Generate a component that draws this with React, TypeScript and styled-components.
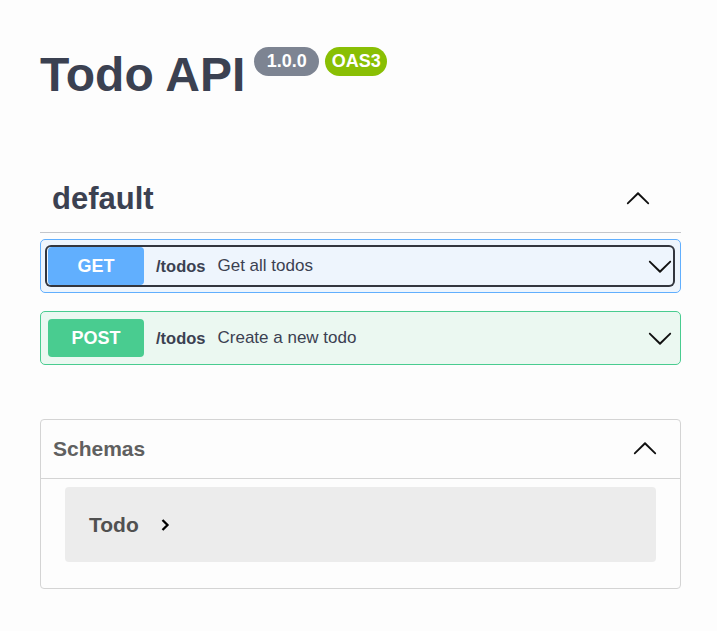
import React from "react";
import styled, { createGlobalStyle } from "styled-components";

const Global = createGlobalStyle`
  html, body { margin: 0; padding: 0; background: #fdfdfd; }
  body { font-family: "Liberation Sans", Arial, sans-serif; color: #3b4151; }
  * { box-sizing: border-box; }
`;

const Page = styled.div`
  padding: 0 36px 40px 40px;
`;

const Info = styled.header`
  display: flex;
  align-items: flex-start;
  padding-top: 47px;
  margin-bottom: 72px;
`;

const Title = styled.h1`
  margin: 4px 0 0;
  font-size: 48px;
  line-height: 48px;
  font-weight: 700;
  color: #3b4151;
`;

const Badge = styled.span<{ $bg: string; $pad: number; $gap: number }>`
  display: inline-flex;
  align-items: center;
  justify-content: center;
  height: 29px;
  padding: 0 ${(p) => p.$pad}px;
  margin-left: ${(p) => p.$gap}px;
  border-radius: 15px;
  background: ${(p) => p.$bg};
  color: #fff;
  font-size: 18px;
  font-weight: 700;
`;

const Tag = styled.section`
  display: flex;
  flex-direction: column;
`;

const TagHeader = styled.div`
  display: flex;
  align-items: center;
  justify-content: space-between;
  height: 62px;
  padding: 0 30px 6px 12px;
  border-bottom: 1px solid #c4c6cb;
  margin-bottom: 6px;
`;

const TagName = styled.h2`
  margin: 0;
  font-size: 31px;
  font-weight: 700;
  color: #3b4151;
`;

const Opblock = styled.div<{ $color: string; $bg: string }>`
  border: 1px solid ${(p) => p.$color};
  background: ${(p) => p.$bg};
  border-radius: 5px;
  margin-bottom: 18px;
  --method: ${(p) => p.$color};
`;

const Summary = styled.div<{ $focused?: boolean }>`
  display: flex;
  align-items: center;
  margin: 7px 7px 7px 6px;
  height: 38px;
  border-radius: 4px;
  box-shadow: ${(p) => (p.$focused ? "0 0 0 2px #33363e" : "none")};
  padding-left: 1px;
`;

const Method = styled.span`
  display: flex;
  align-items: center;
  justify-content: center;
  width: 96px;
  height: 38px;
  border-radius: 4px;
  background: var(--method);
  color: #fff;
  font-size: 18px;
  font-weight: 700;
`;

const Path = styled.span`
  margin-left: 12px;
  font-size: 16.5px;
  font-weight: 700;
  color: #3b4151;
`;

const Desc = styled.span`
  flex: 1;
  margin-left: 12px;
  font-size: 17px;
  color: #3b4151;
`;

const ArrowWrap = styled.span<{ $size: number }>`
  display: flex;
  width: ${(p) => p.$size}px;
  height: ${(p) => p.$size}px;
  color: #111;
`;

const Models = styled.section`
  margin-top: 36px;
  border: 1px solid #d4d4d4;
  border-radius: 4px;
  padding-bottom: 26px;
`;

const ModelsHeader = styled.div`
  display: flex;
  align-items: center;
  justify-content: space-between;
  height: 59px;
  padding: 0 22px 0 12px;
  border-bottom: 1px solid #d4d4d4;
`;

const ModelsTitle = styled.h4`
  margin: 0;
  font-size: 21px;
  font-weight: 700;
  color: #606060;
`;

const ModelBox = styled.div`
  display: flex;
  align-items: center;
  margin: 8px 24px 0;
  height: 75px;
  padding-left: 24px;
  border-radius: 4px;
  background: #ececec;
`;

const ModelName = styled.span`
  font-size: 21px;
  font-weight: 700;
  color: #505050;
`;

const ModelToggle = styled.span`
  display: flex;
  margin-left: 21px;
  width: 10px;
  height: 14px;
  color: #000;
`;

const Chevron = ({ dir, size }: { dir: "up" | "down"; size: number }) => (
  <ArrowWrap $size={size}>
    <svg viewBox="0 0 20 20" width={size} height={size} fill="currentColor"
      style={{ transform: dir === "up" ? "rotate(180deg)" : undefined }}>
      <path d="M17.418 6.109c.272-.268.709-.268.979 0s.271.701 0 .969l-7.908 7.83c-.27.268-.707.268-.979 0l-7.908-7.83c-.27-.268-.27-.701 0-.969.271-.268.709-.268.979 0L10 13.25l7.418-7.141z" />
    </svg>
  </ArrowWrap>
);

const ops = [
  { method: "GET", path: "/todos", desc: "Get all todos", color: "#61affe", bg: "#eef5fd", focused: true },
  { method: "POST", path: "/todos", desc: "Create a new todo", color: "#49cc90", bg: "#ebf8f1", focused: false },
];

export default function App() {
  return (
    <Page>
      <Global />
      <Info>
        <Title>Todo API</Title>
        <Badge $bg="#7d8492" $pad={12.5} $gap={9}>1.0.0</Badge>
        <Badge $bg="#89bf04" $pad={6.5} $gap={6}>OAS3</Badge>
      </Info>
      <Tag>
        <TagHeader>
          <TagName>default</TagName>
          <Chevron dir="up" size={26} />
        </TagHeader>
        {ops.map((o) => (
          <Opblock key={o.method} $color={o.color} $bg={o.bg}>
            <Summary $focused={o.focused}>
              <Method>{o.method}</Method>
              <Path>{o.path}</Path>
              <Desc>{o.desc}</Desc>
              <Chevron dir="down" size={26} />
            </Summary>
          </Opblock>
        ))}
      </Tag>
      <Models>
        <ModelsHeader>
          <ModelsTitle>Schemas</ModelsTitle>
          <Chevron dir="up" size={26} />
        </ModelsHeader>
        <ModelBox>
          <ModelName>Todo</ModelName>
          <ModelToggle>
            <svg viewBox="0 0 10 14" width={10} height={14} fill="none" stroke="currentColor" strokeWidth={2.3}>
              <path d="M2.5 2L7.5 7l-5 5" />
            </svg>
          </ModelToggle>
        </ModelBox>
      </Models>
    </Page>
  );
}
